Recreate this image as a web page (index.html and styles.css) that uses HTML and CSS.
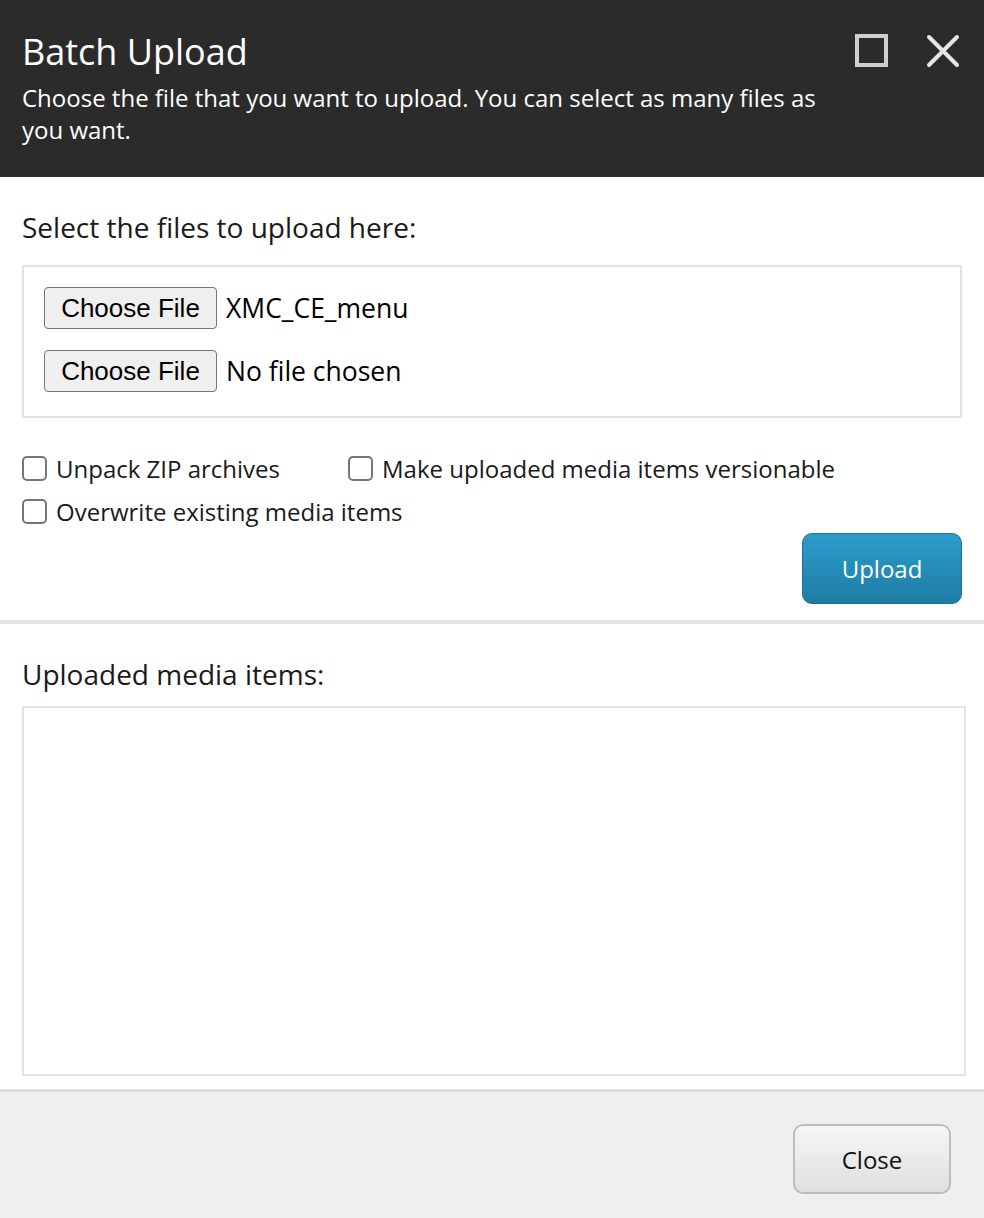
FILE: index.html
```html
<!DOCTYPE html>
<html>
<head>
<meta charset="utf-8">
<link rel="stylesheet" href="styles.css">
</head>
<body>
<div class="dialog">
  <header class="head">
    <div class="head-text">
      <h1 class="title">Batch Upload</h1>
      <p class="subtitle">Choose the file that you want to upload. You can select as many files as you want.</p>
    </div>
    <div class="head-icons">
      <svg class="icon" width="34" height="34" viewBox="0 0 34 34"><rect x="2" y="2" width="29" height="29" fill="none" stroke="#cfcfcf" stroke-width="4"/></svg>
      <svg class="icon" width="34" height="34" viewBox="0 0 34 34"><path d="M3 3 L31 31 M31 3 L3 31" stroke="#e6e6e6" stroke-width="4" stroke-linecap="round"/></svg>
    </div>
  </header>

  <section class="upload-sec">
    <div class="label">Select the files to upload here:</div>
    <div class="files-box">
      <div class="file-row"><span class="file-btn">Choose File</span><span class="file-name">XMC_CE_menu</span></div>
      <div class="file-row"><span class="file-btn">Choose File</span><span class="file-name">No file chosen</span></div>
    </div>
    <div class="opts">
      <div class="opt-row">
        <label class="opt opt-first"><span class="cb"></span>Unpack ZIP archives</label>
        <label class="opt"><span class="cb"></span>Make uploaded media items versionable</label>
      </div>
      <div class="opt-row">
        <label class="opt"><span class="cb"></span>Overwrite existing media items</label>
      </div>
    </div>
    <div class="actions">
      <button class="btn-primary">Upload</button>
    </div>
  </section>

  <section class="items-sec">
    <div class="label">Uploaded media items:</div>
    <div class="items-box"></div>
  </section>

  <footer class="foot">
    <button class="btn-close">Close</button>
  </footer>
</div>
</body>
</html>
```

FILE: styles.css
```css
html, body {
  margin: 0;
  padding: 0;
  background: #ffffff;
}
body {
  font-family: "Open Sans", "Noto Sans", sans-serif;
  color: #1a1a1a;
}
.dialog {
  width: 984px;
  height: 1218px;
  display: flex;
  flex-direction: column;
}
.head {
  background: #2b2b2b;
  height: 177px;
  flex: none;
  box-sizing: border-box;
  padding: 24px 24px 0 22px;
  display: flex;
  justify-content: space-between;
  align-items: flex-start;
  color: #ffffff;
}
.head-text {
  width: 800px;
}
.title {
  margin: 0;
  font-weight: 400;
  font-size: 36px;
  line-height: 56px;
}
.subtitle {
  margin: 2px 0 0 0;
  font-size: 24px;
  line-height: 32px;
}
.head-icons {
  display: flex;
  gap: 37px;
  margin-top: 10px;
}
.icon {
  display: block;
}
.upload-sec {
  padding: 30px 22px 16px 22px;
  border-bottom: 4px solid #e3e3e3;
}
.label {
  font-size: 28px;
  line-height: 40px;
  color: #1a1a1a;
}
.files-box {
  margin-top: 18px;
  border: 2px solid #e3e3e3;
  height: 153px;
  box-sizing: border-box;
  padding: 20px 20px 0 20px;
  display: flex;
  flex-direction: column;
  gap: 21px;
}
.file-row {
  display: flex;
  align-items: center;
  height: 42px;
}
.file-btn {
  box-sizing: border-box;
  height: 42px;
  width: 173px;
  border: 1.5px solid #767676;
  border-radius: 4px;
  background: #efefef;
  font-family: "Liberation Sans", Arial, sans-serif;
  font-size: 26px;
  color: #000;
  display: flex;
  align-items: center;
  justify-content: center;
}
.file-name {
  margin-left: 9px;
  font-size: 26.5px;
  color: #000;
}
.opts {
  margin-top: 38px;
  display: flex;
  flex-direction: column;
  gap: 18px;
}
.opt-row {
  display: flex;
}
.opt {
  display: flex;
  align-items: center;
  gap: 9px;
  font-size: 24px;
  line-height: 25px;
  color: #1a1a1a;
}
.opt-first {
  width: 326px;
}
.cb {
  box-sizing: border-box;
  width: 25px;
  height: 25px;
  border: 2px solid #767676;
  border-radius: 5px;
  background: #fff;
  flex: none;
}
.actions {
  display: flex;
  justify-content: flex-end;
  margin-top: 9px;
}
.btn-primary {
  width: 160px;
  height: 71px;
  border: 1px solid #1d6f95;
  border-radius: 10px;
  background: linear-gradient(#2a9dcc, #1f7ca6);
  color: #ffffff;
  font-family: "Open Sans", sans-serif;
  font-size: 24px;
}
.items-sec {
  padding: 30px 18px 13px 22px;
}
.items-box {
  margin-top: 12px;
  height: 370px;
  border: 2px solid #e3e3e3;
  box-sizing: border-box;
}
.foot {
  flex: 1;
  background: #efefef;
  border-top: 3px solid #dedede;
  display: flex;
  justify-content: flex-end;
  align-items: flex-start;
  padding: 32px 33px 0 0;
}
.btn-close {
  width: 158px;
  height: 70px;
  border: 2px solid #bdbdbd;
  border-radius: 10px;
  background: linear-gradient(#f6f6f6, #dfdfdf);
  color: #111;
  font-family: "Open Sans", sans-serif;
  font-size: 24px;
}
```
